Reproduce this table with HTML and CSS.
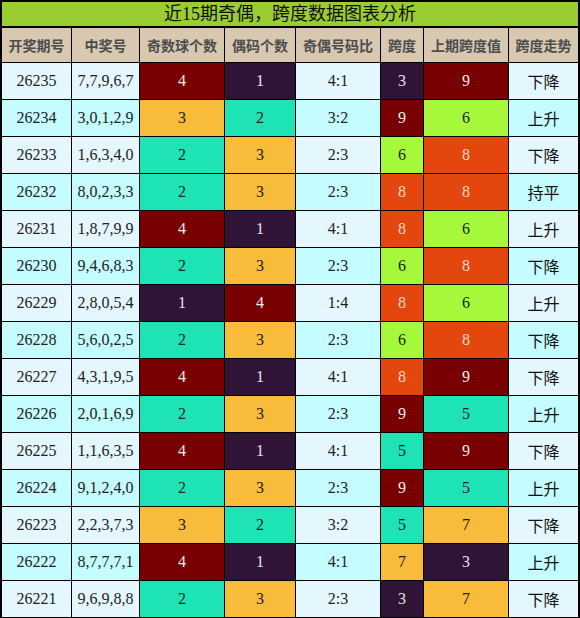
FILE: index.html
```html
<!DOCTYPE html>
<html>

<head lang="zh">
    <meta charset="UTF-8">
    <title>近15期奇偶，跨度数据图表分析</title>
    <link rel="stylesheet" href="styles.css">
</head>

<body>
    <div class="board">
        <div class="title">近15期奇偶，跨度数据图表分析</div>

        <div class="head">
            <div>开奖期号</div>
            <div>中奖号</div>
            <div>奇数球个数</div>
            <div>偶码个数</div>
            <div>奇偶号码比</div>
            <div>跨度</div>
            <div>上期跨度值</div>
            <div>跨度走势</div>
        </div>

        <div class="row odd">
            <div>26235</div><div>7,7,9,6,7</div>
            <div class="red">4</div><div class="pur">1</div>
            <div>4:1</div>
            <div class="pur">3</div><div class="red">9</div>
            <div class="cn">下降</div>
        </div>
        <div class="row even">
            <div>26234</div><div>3,0,1,2,9</div>
            <div class="org">3</div><div class="teal">2</div>
            <div>3:2</div>
            <div class="red">9</div><div class="grn">6</div>
            <div class="cn">上升</div>
        </div>
        <div class="row odd">
            <div>26233</div><div>1,6,3,4,0</div>
            <div class="teal">2</div><div class="org">3</div>
            <div>2:3</div>
            <div class="grn">6</div><div class="fire">8</div>
            <div class="cn">下降</div>
        </div>
        <div class="row even">
            <div>26232</div><div>8,0,2,3,3</div>
            <div class="teal">2</div><div class="org">3</div>
            <div>2:3</div>
            <div class="fire">8</div><div class="fire">8</div>
            <div class="cn">持平</div>
        </div>
        <div class="row odd">
            <div>26231</div><div>1,8,7,9,9</div>
            <div class="red">4</div><div class="pur">1</div>
            <div>4:1</div>
            <div class="fire">8</div><div class="grn">6</div>
            <div class="cn">上升</div>
        </div>
        <div class="row even">
            <div>26230</div><div>9,4,6,8,3</div>
            <div class="teal">2</div><div class="org">3</div>
            <div>2:3</div>
            <div class="grn">6</div><div class="fire">8</div>
            <div class="cn">下降</div>
        </div>
        <div class="row odd">
            <div>26229</div><div>2,8,0,5,4</div>
            <div class="pur">1</div><div class="red">4</div>
            <div>1:4</div>
            <div class="fire">8</div><div class="grn">6</div>
            <div class="cn">上升</div>
        </div>
        <div class="row even">
            <div>26228</div><div>5,6,0,2,5</div>
            <div class="teal">2</div><div class="org">3</div>
            <div>2:3</div>
            <div class="grn">6</div><div class="fire">8</div>
            <div class="cn">下降</div>
        </div>
        <div class="row odd">
            <div>26227</div><div>4,3,1,9,5</div>
            <div class="red">4</div><div class="pur">1</div>
            <div>4:1</div>
            <div class="fire">8</div><div class="red">9</div>
            <div class="cn">下降</div>
        </div>
        <div class="row even">
            <div>26226</div><div>2,0,1,6,9</div>
            <div class="teal">2</div><div class="org">3</div>
            <div>2:3</div>
            <div class="red">9</div><div class="teal">5</div>
            <div class="cn">上升</div>
        </div>
        <div class="row odd">
            <div>26225</div><div>1,1,6,3,5</div>
            <div class="red">4</div><div class="pur">1</div>
            <div>4:1</div>
            <div class="teal">5</div><div class="red">9</div>
            <div class="cn">下降</div>
        </div>
        <div class="row even">
            <div>26224</div><div>9,1,2,4,0</div>
            <div class="teal">2</div><div class="org">3</div>
            <div>2:3</div>
            <div class="red">9</div><div class="teal">5</div>
            <div class="cn">上升</div>
        </div>
        <div class="row odd">
            <div>26223</div><div>2,2,3,7,3</div>
            <div class="org">3</div><div class="teal">2</div>
            <div>3:2</div>
            <div class="teal">5</div><div class="org">7</div>
            <div class="cn">下降</div>
        </div>
        <div class="row even">
            <div>26222</div><div>8,7,7,7,1</div>
            <div class="red">4</div><div class="pur">1</div>
            <div>4:1</div>
            <div class="org">7</div><div class="pur">3</div>
            <div class="cn">上升</div>
        </div>
        <div class="row odd">
            <div>26221</div><div>9,6,9,8,8</div>
            <div class="teal">2</div><div class="org">3</div>
            <div>2:3</div>
            <div class="pur">3</div><div class="org">7</div>
            <div class="cn">下降</div>
        </div>
    </div>
</body>

</html>
```

FILE: styles.css
```css
/*reset*/
body,
div {
    margin: 0;
    padding: 0;
}

body {
    font: 16px/1 "Liberation Serif", "Noto Sans CJK SC", serif;
    color: #222;
    background: #fff;
}

/*表格外框：黑底 + 1px 间隙 当作边线*/
.board {
    width: 580px;
    display: grid;
    grid-template-columns: 69px 67px 84px 70px 84px 42px 84px 69px;
    grid-template-rows: 25px 34px repeat(15, 36px);
    gap: 1px;
    padding: 2px 2px 1px 2px;
    box-sizing: border-box;
    background: #000;
}

.title {
    grid-column: 1 / -1;
    border-bottom: 1px solid #000;
    background: #9acd32;
    color: #111;
    font-size: 18px;
    display: flex;
    align-items: center;
    justify-content: center;
}

.head,
.row {
    display: contents;
}

.head > div,
.row > div {
    display: flex;
    align-items: center;
    justify-content: center;
}

.head > div {
    background: #d8c8b0;
    color: #4d4d4d;
    font: bold 14px "Noto Sans CJK SC", sans-serif;
}

.odd > div {
    background: #e4f7ff;
}

.even > div {
    background: #c4fcff;
}

.row > .cn {
    font-family: "Noto Sans CJK SC", sans-serif;
    color: #111;
}

/*颜色块*/
.row > .red {
    background: #780000;
    color: #eee;
}

.row > .pur {
    background: #2f1438;
    color: #e6e6e6;
}

.row > .org {
    background: #f8bb3a;
}

.row > .teal {
    background: #1ee4b5;
}

.row > .grn {
    background: #a6f83a;
}

.row > .fire {
    background: #e4470d;
    color: #fbd9cc;
}
```
